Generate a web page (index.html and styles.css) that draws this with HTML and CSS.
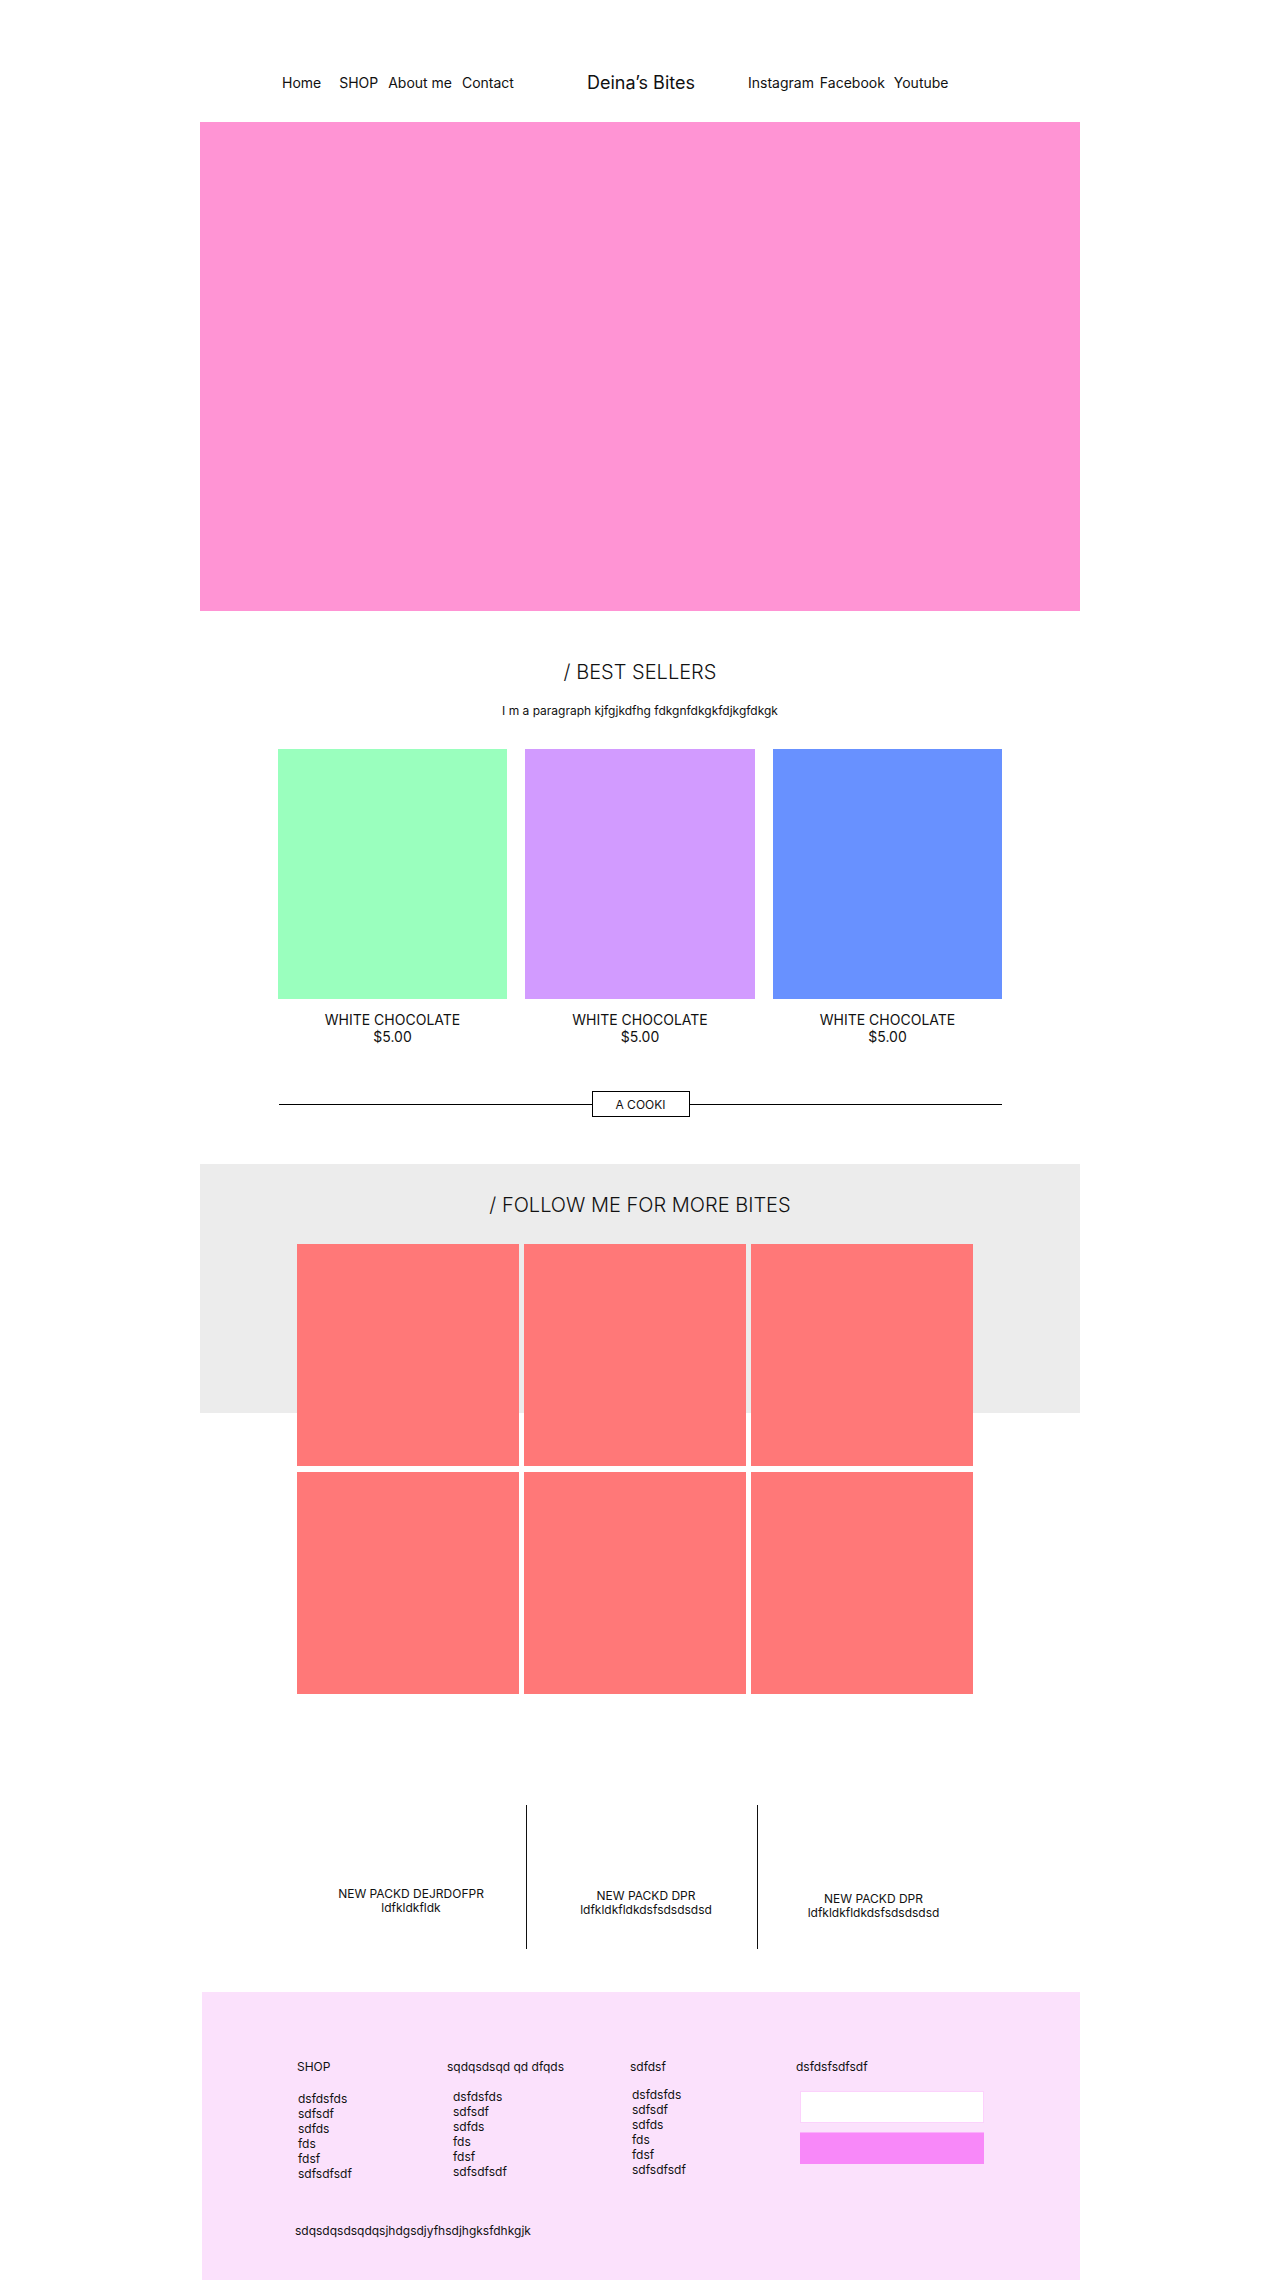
FILE: index.html
```html
<!DOCTYPE html>
<html lang="en">
<head>
  <meta charset="UTF-8">
  <meta name="viewport" content="width=device-width, initial-scale=1.0">
  <title>Deina’s Bites</title>
  <link rel="stylesheet" href="styles.css">
</head>
<body>
  <div class="page">
    <header class="nav">
      <nav class="nav-left">
        <a href="#" class="nav-home">Home</a>
        <a href="#">SHOP</a>
        <a href="#">About me</a>
        <a href="#">Contact</a>
      </nav>
      <div class="logo">Deina’s Bites</div>
      <nav class="nav-right">
        <a href="#">Instagram</a>
        <a href="#" class="nav-fb">Facebook</a>
        <a href="#">Youtube</a>
      </nav>
    </header>

    <div class="hero"></div>

    <!-- Best sellers -->
    <section class="best">
      <h2 class="section-title">/ BEST SELLERS</h2>
      <p class="intro">I m a paragraph kjfgjkdfhg fdkgnfdkgkfdjkgfdkgk</p>
      <div class="products">
        <div class="product">
          <div class="product-img green"></div>
          <p class="product-name">WHITE CHOCOLATE</p>
          <p class="product-price">$5.00</p>
        </div>
        <div class="product">
          <div class="product-img purple"></div>
          <p class="product-name">WHITE CHOCOLATE</p>
          <p class="product-price">$5.00</p>
        </div>
        <div class="product">
          <div class="product-img blue"></div>
          <p class="product-name">WHITE CHOCOLATE</p>
          <p class="product-price">$5.00</p>
        </div>
      </div>
      <div class="divider">
        <span class="divider-line"></span>
        <button class="cookie-btn">A COOKI</button>
        <span class="divider-line"></span>
      </div>
    </section>

    <!-- Follow -->
    <section class="follow">
      <h2 class="section-title">/ FOLLOW ME FOR MORE BITES</h2>
      <div class="insta-grid">
        <div class="insta-item"></div>
        <div class="insta-item"></div>
        <div class="insta-item"></div>
        <div class="insta-item"></div>
        <div class="insta-item"></div>
        <div class="insta-item"></div>
      </div>
    </section>

    <!-- Packs -->
    <section class="packs">
      <div class="pack pack-1">
        <p class="pack-title">NEW PACKD DEJRDOFPR</p>
        <p class="pack-text">ldfkldkfldk</p>
      </div>
      <div class="pack pack-2">
        <p class="pack-title">NEW PACKD DPR</p>
        <p class="pack-text">ldfkldkfldkdsfsdsdsdsd</p>
      </div>
      <div class="pack pack-3">
        <p class="pack-title">NEW PACKD DPR</p>
        <p class="pack-text">ldfkldkfldkdsfsdsdsdsd</p>
      </div>
    </section>

    <footer class="footer">
      <div class="footer-cols">
        <div class="footer-col col-1">
          <h4>SHOP</h4>
          <ul>
            <li>dsfdsfds</li>
            <li>sdfsdf</li>
            <li>sdfds</li>
            <li>fds</li>
            <li>fdsf</li>
            <li>sdfsdfsdf</li>
          </ul>
        </div>
        <div class="footer-col col-2">
          <h4>sqdqsdsqd qd dfqds</h4>
          <ul>
            <li>dsfdsfds</li>
            <li>sdfsdf</li>
            <li>sdfds</li>
            <li>fds</li>
            <li>fdsf</li>
            <li>sdfsdfsdf</li>
          </ul>
        </div>
        <div class="footer-col col-3">
          <h4>sdfdsf</h4>
          <ul>
            <li>dsfdsfds</li>
            <li>sdfsdf</li>
            <li>sdfds</li>
            <li>fds</li>
            <li>fdsf</li>
            <li>sdfsdfsdf</li>
          </ul>
        </div>
        <div class="footer-col col-4">
          <h4>dsfdsfsdfsdf</h4>
          <form class="newsletter">
            <input type="email" class="newsletter-input">
            <button type="button" class="newsletter-btn"></button>
          </form>
        </div>
      </div>
      <p class="footer-note">sdqsdqsdsqdqsjhdgsdjyfhsdjhgksfdhkgjk</p>
    </footer>
  </div>
</body>
</html>
```

FILE: styles.css
```css
body {
  margin: 0;
  font-family: Inter, "Noto Sans", Arial, sans-serif;
  color: #111;
  background-color: white;
}

p, h2, h4, ul {
  margin: 0;
  padding: 0;
}

a {
  color: #111;
  text-decoration: none;
}

.page {
  width: 880px;
  margin: 0 auto;
}

/* Header */
.nav {
  display: grid;
  grid-template-columns: 305px 161px auto;
  align-items: center;
  height: 122px;
  padding-left: 82px;
  box-sizing: border-box;
  padding-bottom: 29px;
  padding-top: 73px;
  font-size: 14px;
  line-height: 20px;
}

.nav-left a {
  margin-right: 6px;
}

.nav-left .nav-home {
  margin-right: 14px;
}

.nav-right a {
  margin-right: 2px;
}

.nav-right .nav-fb {
  margin-right: 5px;
}

.logo {
  font-size: 18px;
  line-height: 20px;
}

.hero {
  height: 489px;
  background-color: #ff94d4;
}

/* Best sellers */
.section-title {
  font-size: 20px;
  font-weight: 300;
  line-height: 24px;
  text-align: center;
}

.best {
  padding-top: 49px;
}

.intro {
  margin-top: 19px;
  font-size: 12px;
  line-height: 16px;
  text-align: center;
}

.products {
  display: grid;
  grid-template-columns: 229px 230px 229px;
  column-gap: 18px;
  margin: 30px 0 0 78px;
}

.product-img {
  height: 250px;
}

.green { background-color: #9affbe; }
.purple { background-color: #d29bff; }
.blue { background-color: #6891ff; }

.product-name {
  margin-top: 12px;
}

.product-name,
.product-price {
  font-size: 14px;
  line-height: 17px;
  text-align: center;
}

.divider {
  display: flex;
  align-items: center;
  width: 723px;
  margin: 46px 0 0 79px;
}

.divider-line {
  flex: 1;
  height: 1px;
  background-color: #000;
}

.cookie-btn {
  width: 98px;
  height: 26px;
  border: 1px solid #000;
  background: white;
  font-family: inherit;
  font-size: 12px;
  color: #111;
  padding: 0;
}

/* Follow */
.follow {
  height: 249px;
  margin-top: 47px;
  padding-top: 29px;
  box-sizing: border-box;
  background-color: #ececec;
}

.insta-grid {
  display: grid;
  grid-template-columns: repeat(3, 222px);
  grid-auto-rows: 222px;
  column-gap: 5px;
  row-gap: 6px;
  margin: 27px 0 0 97px;
}

.insta-item {
  background-color: #ff7878;
}

/* Packs */
.packs {
  display: grid;
  grid-template-columns: 231px 231px 231px;
  height: 144px;
  margin-top: 392px;
  padding-left: 96px;
}

.pack {
  text-align: center;
}

.pack-1,
.pack-2 {
  border-right: 1px solid #111;
}

.pack-1 { padding-top: 82px; }
.pack-2 { padding-top: 84px; padding-left: 8px; }
.pack-3 { padding-top: 87px; }

.pack-title {
  font-size: 12px;
  line-height: 14px;
}

.pack-text {
  font-size: 12px;
  line-height: 13px;
}

/* Footer */
.footer {
  height: 288px;
  margin: 43px 0 0 2px;
  padding: 67px 0 0 95px;
  box-sizing: border-box;
  background-color: #fbe1fc;
  font-size: 12px;
  line-height: 15px;
}

.footer-cols {
  display: grid;
  grid-template-columns: 150px 183px 166px 190px;
}

.footer-col h4 {
  font-size: 12px;
  font-weight: 400;
  line-height: 15px;
}

.footer-col ul {
  list-style: none;
}

.col-1 ul { margin-top: 17px; padding-left: 1px; }
.col-2 ul { margin-top: 15px; padding-left: 6px; }
.col-3 ul { margin-top: 13px; padding-left: 2px; }

.newsletter {
  display: flex;
  flex-direction: column;
  margin: 17px 0 0 4px;
}

.newsletter-input {
  width: 184px;
  height: 32px;
  box-sizing: border-box;
  border: 1px solid #fcd2fc;
  background: white;
}

.newsletter-btn {
  width: 184px;
  height: 32px;
  margin-top: 9px;
  border: none;
  border-top: 1px solid #fbb0fb;
  background-color: #f888f9;
}

.footer-note {
  margin-top: 42px;
  margin-left: -2px;
}
```
